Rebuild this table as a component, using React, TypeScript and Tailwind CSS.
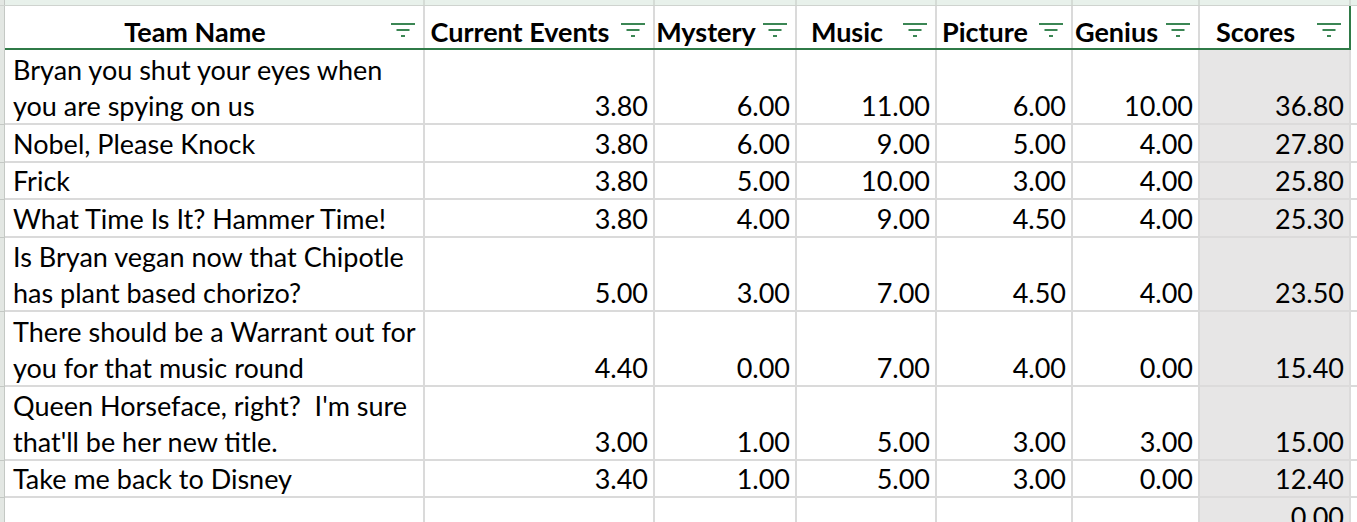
const headers = [
  { label: "Team Name", w: "w-[420px]" },
  { label: "Current Events", w: "w-[230px]" },
  { label: "Mystery", w: "w-[142px]" },
  { label: "Music", w: "w-[140px]" },
  { label: "Picture", w: "w-[136px]" },
  { label: "Genius", w: "w-[127px]" },
  { label: "Scores", w: "w-[151px]" },
];

const numWidths = ["w-[230px]", "w-[142px]", "w-[140px]", "w-[136px]", "w-[127px]"];

const rows = [
  { h: "h-[75px]", name: ["Bryan you shut your eyes when", "you are spying on us"], nums: ["3.80", "6.00", "11.00", "6.00", "10.00"], score: "36.80" },
  { h: "h-[38px]", name: ["Nobel, Please Knock"], nums: ["3.80", "6.00", "9.00", "5.00", "4.00"], score: "27.80" },
  { h: "h-[37px]", name: ["Frick"], nums: ["3.80", "5.00", "10.00", "3.00", "4.00"], score: "25.80" },
  { h: "h-[38px]", name: ["What Time Is It? Hammer Time!"], nums: ["3.80", "4.00", "9.00", "4.50", "4.00"], score: "25.30" },
  { h: "h-[74px]", name: ["Is Bryan vegan now that Chipotle", "has plant based chorizo?"], nums: ["5.00", "3.00", "7.00", "4.50", "4.00"], score: "23.50" },
  { h: "h-[75px]", name: ["There should be a Warrant out for", "you for that music round"], nums: ["4.40", "0.00", "7.00", "4.00", "0.00"], score: "15.40" },
  { h: "h-[74px]", name: ["Queen Horseface, right?  I'm sure", "that'll be her new title."], nums: ["3.00", "1.00", "5.00", "3.00", "3.00"], score: "15.00" },
  { h: "h-[37px]", name: ["Take me back to Disney"], nums: ["3.40", "1.00", "5.00", "3.00", "0.00"], score: "12.40" },
  { h: "h-[38px]", name: [], nums: ["", "", "", "", ""], score: "0.00" },
];

const FilterIcon = () => (
  <svg width="24" height="14" viewBox="0 0 24 14" className="shrink-0">
    <rect x="0" y="0" width="24" height="2" fill="#3b8654" />
    <rect x="5.5" y="6" width="13" height="2" fill="#3b8654" />
    <rect x="10" y="12" width="4" height="2" fill="#3b8654" />
  </svg>
);

export default function App() {
  return (
    <div className="w-[1357px] h-[522px] overflow-hidden bg-white text-black font-['Lato',sans-serif]">
      {/* strip of the row above */}
      <div className="flex h-[6px] border-b border-[#cfd3cf] bg-[#e8f1eb]">
        <div className="w-[5px] border-r border-[#c4c8c4] bg-[#e3e7e3]" />
        {headers.map((h) => (
          <div key={h.label} className={`${h.w} border-r-2 border-[#d5dcd6]`} />
        ))}
      </div>

      {/* header */}
      <div className="flex h-[44px]">
        <div className="w-[5px] border-r border-[#c4c8c4] bg-[#e3e7e3]" />
        <div className="flex border-b-2 border-[#2f7a47]">
          {headers.map((h, i) => (
            <div
              key={h.label}
              className={`${h.w} flex items-start ${i === 6 ? "border-r-2 border-[#2f7a47]" : "border-r-2 border-[#dadada]"}`}
            >
              <span className="flex-1 pr-[6px] pt-[7px] text-center text-[27px] leading-[37px] font-bold whitespace-nowrap">
                {h.label}
              </span>
              <div className="mr-[8px] mt-[17px]">
                <FilterIcon />
              </div>
            </div>
          ))}
        </div>
      </div>

      {rows.map((r, idx) => (
        <div key={idx} className={`flex ${r.h}`}>
          <div className="w-[5px] border-r border-b border-[#c4c8c4] bg-[#e3e7e3]" />
          <div className="w-[420px] flex flex-col justify-end border-r-2 border-b-2 border-[#dadada] pl-[8px] text-[27px] leading-[36px] whitespace-pre">
            <div className="translate-y-[1px]">
              {r.name.map((line) => (
                <div key={line}>{line}</div>
              ))}
            </div>
          </div>
          {r.nums.map((n, j) => (
            <div
              key={j}
              className={`${numWidths[j]} flex items-end justify-end border-r-2 border-b-2 border-[#dadada] pr-[5px] text-[27px] leading-[36px]`}
            >
              <span className="translate-y-[1px]">{n}</span>
            </div>
          ))}
          <div className="w-[151px] flex items-end justify-end border-r-2 border-b-2 border-[#dcdbdb] bg-[#e7e6e6] pr-[5px] text-[27px] leading-[36px]">
            <span className="translate-y-[1px]">{r.score}</span>
          </div>
          <div className="w-[6px] border-b-2 border-[#dadada]" />
        </div>
      ))}
    </div>
  );
}
